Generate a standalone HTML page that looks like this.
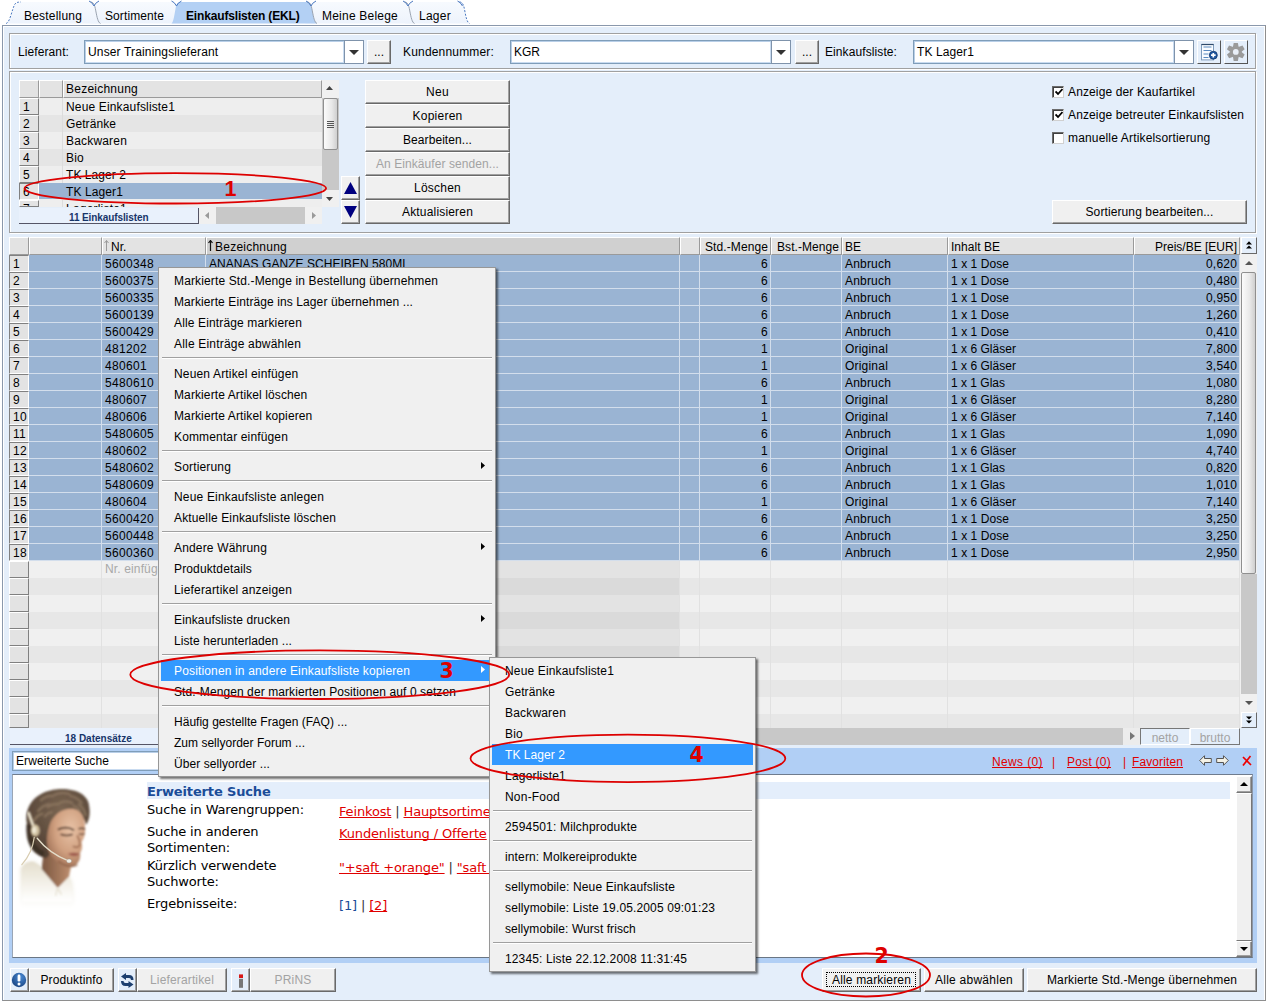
<!DOCTYPE html>
<html lang="de"><head><meta charset="utf-8"><title>Einkaufslisten (EKL)</title>
<style>
html,body{margin:0;padding:0;}
body{width:1266px;height:1001px;position:relative;overflow:hidden;background:#fff;
 font-family:"Liberation Sans",sans-serif;font-size:12px;color:#000;line-height:14px;}
div,span,svg{position:absolute;box-sizing:border-box;}
.t{white-space:nowrap;line-height:14px;height:14px;}
.panel{background:#e4eefa;}
.etch{border:1px solid #a0a0a0;box-shadow:inset 1px 1px 0 #fff, 1px 1px 0 #fff;}
.btn{background:#f0f0f0;border-top:1px solid #fff;border-left:1px solid #fff;border-right:1px solid #696969;border-bottom:1px solid #696969;box-shadow:inset -1px -1px 0 #a0a0a0;
 text-align:center;white-space:nowrap;line-height:23px;}
.btn.dis{color:#a3a3a3;}
.combo{background:#fff;border:2px solid #7f9db9;border-top-color:#6886a8;border-left-color:#7f9db9;}
.hdr{background:#e3e3e3;border-right:1px solid #9a9a9a;border-bottom:1px solid #9a9a9a;border-top:1px solid #fff;border-left:1px solid #fff;white-space:nowrap;overflow:hidden;line-height:18px;}
.rn{background:#e3e3e3;border-top:1px solid #fff;border-left:1px solid #fff;border-right:1px solid #808080;border-bottom:1px solid #808080;line-height:16px;padding-left:3px;overflow:hidden;}
.rn.prs{border-top-color:#808080;border-left-color:#808080;border-right-color:#fff;border-bottom-color:#fff;}
.cell{white-space:nowrap;line-height:19px;border-right:1px solid #d3deec;border-bottom:1px solid #d3deec;}
.sel{background:#9ab4d3;}
.r{text-align:right;}
.menu{background:#f0f0f0;border:1px solid #979797;box-shadow:2px 2px 2px rgba(0,0,0,.55);}
.mi{left:2px;height:21px;line-height:21px;white-space:nowrap;}
.mi span{position:absolute;left:13px;top:1px;line-height:21px;}
.mi.hl{background:#3399ff;color:#fff;}
.msep{height:1px;background:#a0a0a0;box-shadow:0 1px 0 #fff;}
.red{color:#e00000;}
a{color:#e00000;text-decoration:underline;text-decoration-skip-ink:none;}
.dj{font-family:"DejaVu Sans","Liberation Sans",sans-serif;}

</style></head>
<body>
<svg width="1266" height="26" style="left:0;top:0" viewBox="0 0 1266 26"><defs><linearGradient id="tg" x1="0" y1="0" x2="0" y2="1"><stop offset="0" stop-color="#f7fafe"/><stop offset="1" stop-color="#edf3fc"/></linearGradient></defs><path d="M405 23.5 C407.0 22.5 408.0 14 409.0 9 S410.0 2 415 2 L459.5 2 C463.5 2 464.0 7 465.0 12 S467.0 22.5 469.5 23.5 Z" fill="url(#tg)"/><path d="M459.5 2 C463.5 2 464.0 7 465.0 12 S467.0 22.5 469.5 23.5" fill="none" stroke="#4a78c0" stroke-width="1" stroke-dasharray="2 1.5"/><path d="M457.5 1 q3 1 5 5" fill="none" stroke="#4a78c0" stroke-width="1"/><path d="M305 23.5 C307.0 22.5 308.0 14 309.0 9 S310.0 2 315 2 L404.5 2 C408.5 2 409.0 7 410.0 12 S412.0 22.5 414.5 23.5 Z" fill="url(#tg)"/><path d="M404.5 2 C408.5 2 409.0 7 410.0 12 S412.0 22.5 414.5 23.5" fill="none" stroke="#9aa3b0" stroke-width="1"/><path d="M403.0 1 q3 1 5 5 q1 -3 5 -5" fill="none" stroke="#4a78c0" stroke-width="1"/><path d="M90 23.5 C92.0 22.5 93.0 14 94.0 9 S95.0 2 100 2 L172 2 C176 2 176.5 7 177.5 12 S179.5 22.5 182 23.5 Z" fill="url(#tg)"/><path d="M6 23.5 C9.4 22.5 11.1 14 12.9 9 S14.6 2 21 2 L90.5 2 C94.5 2 95.0 7 96.0 12 S98.0 22.5 100.5 23.5 Z" fill="url(#tg)"/><path d="M90.5 2 C94.5 2 95.0 7 96.0 12 S98.0 22.5 100.5 23.5" fill="none" stroke="#9aa3b0" stroke-width="1"/><path d="M89.0 1 q3 1 5 5 q1 -3 5 -5" fill="none" stroke="#4a78c0" stroke-width="1"/><path d="M6 23.5 C9.4 22.5 11.1 14 12.9 9 S14.6 2 21 2" fill="none" stroke="#4a78c0" stroke-width="1" stroke-dasharray="2 1.5"/><path d="M171.5 23.5 C173.5 22.5 174.5 14 175.5 9 S176.5 2 181.5 2 L307 2 C311 2 311.5 7 312.5 12 S314.5 22.5 317 23.5 Z" fill="#b3d0f4"/><path d="M307 2 C311 2 311.5 7 312.5 12 S314.5 22.5 317 23.5" fill="none" stroke="#9aa3b0" stroke-width="1"/><path d="M171.5 1 q3 1 5 5 q1 -3 5 -5" fill="none" stroke="#4a78c0" stroke-width="1"/><path d="M306 1 q3 1 5 5 q1 -3 5 -5" fill="none" stroke="#4a78c0" stroke-width="1"/></svg><div class="t" style="left:24px;top:9px;letter-spacing:0.196px;">Bestellung</div><div class="t" style="left:105px;top:9px;letter-spacing:0.097px;">Sortimente</div><div class="t" style="left:186px;top:9px;letter-spacing:0.098px;font-weight:bold;letter-spacing:-0.16px;">Einkaufslisten (EKL)</div><div class="t" style="left:322px;top:9px;letter-spacing:0.218px;">Meine Belege</div><div class="t" style="left:419px;top:9px;letter-spacing:0.262px;">Lager</div><div class="panel" style="left:2px;top:25px;width:1264px;height:976px;border:1px solid #8a98ac;border-right-color:#8e8e8e;border-bottom-color:#8e8e8e;box-shadow:inset 1px 1px 0 #fff, inset -1px 0 0 #fff;"></div><div class="etch" style="left:9px;top:33px;width:1247px;height:36px;"></div><div class="t" style="left:18px;top:45px;letter-spacing:0.097px;">Lieferant:</div><div style="left:84px;top:40px;width:261px;height:24px;background:#fff;border:1px solid #7f9db9;box-shadow:inset 1px 1px 0 #b9cfe8, inset -1px -1px 0 #c9dbf0;"><div class="t" style="left:3px;top:4px;letter-spacing:0.15px;">Unser Trainingslieferant</div></div><div style="left:344px;top:40px;width:20px;height:24px;background:#fff;border:1px solid #7f93ab;"><svg width="10" height="5" style="left:4px;top:9px" viewBox="0 0 10 5"><path d="M0 0H10L5 5Z" fill="#333"/></svg></div><div class="btn" style="left:367px;top:40px;width:24px;height:24px;line-height:22px;">...</div><div class="t" style="left:403px;top:45px;letter-spacing:0.176px;">Kundennummer:</div><div style="left:510px;top:40px;width:262px;height:24px;background:#fff;border:1px solid #7f9db9;box-shadow:inset 1px 1px 0 #b9cfe8, inset -1px -1px 0 #c9dbf0;"><div class="t" style="left:3px;top:4px;">KGR</div></div><div style="left:771px;top:40px;width:20px;height:24px;background:#fff;border:1px solid #7f93ab;"><svg width="10" height="5" style="left:4px;top:9px" viewBox="0 0 10 5"><path d="M0 0H10L5 5Z" fill="#333"/></svg></div><div class="btn" style="left:795px;top:40px;width:24px;height:24px;line-height:22px;">...</div><div class="t" style="left:825px;top:45px;letter-spacing:0.093px;">Einkaufsliste:</div><div style="left:913px;top:40px;width:262px;height:24px;background:#fff;border:1px solid #7f9db9;box-shadow:inset 1px 1px 0 #b9cfe8, inset -1px -1px 0 #c9dbf0;"><div class="t" style="left:3px;top:4px;letter-spacing:0.107px;">TK Lager1</div></div><div style="left:1174px;top:40px;width:20px;height:24px;background:#fff;border:1px solid #7f93ab;"><svg width="10" height="5" style="left:4px;top:9px" viewBox="0 0 10 5"><path d="M0 0H10L5 5Z" fill="#333"/></svg></div><div class="btn" style="left:1197px;top:40px;width:24px;height:24px;background:#e4eefa;box-shadow:none;border-right-color:#555;border-bottom-color:#555;"><svg width="21" height="21" style="left:1px;top:1px" viewBox="0 0 21 21"><rect x="2.5" y="2.5" width="12" height="15.4" fill="#fafcff" stroke="#7f9cbc" stroke-width="1"/><path d="M2.5 2.5h12" stroke="#2f4a6a" stroke-width="1.2"/><path d="M4.5 5h8M4.5 8.5h8M4.5 12h5M4.5 15.5h5" stroke="#5a8ac0" stroke-width="1.1"/><circle cx="14.3" cy="13.2" r="4" fill="#1d55a0" stroke="#12396f" stroke-width=".8"/><path d="M12 13.2h4.6M14.3 10.9v4.6" stroke="#fff" stroke-width="1.7"/></svg></div><div class="btn" style="left:1224px;top:40px;width:24px;height:24px;background:#e4eefa;box-shadow:none;border-right-color:#555;border-bottom-color:#555;"><svg width="21" height="21" style="left:1px;top:1px" viewBox="0 0 21 21"><g transform="translate(9.8 9.9)"><path d="M-2.1 -9 L2.1 -9 L2.9 -4.6 L-2.9 -4.6Z" transform="rotate(0)" fill="#9a9a9a"/><path d="M-2.1 -9 L2.1 -9 L2.9 -4.6 L-2.9 -4.6Z" transform="rotate(60)" fill="#9a9a9a"/><path d="M-2.1 -9 L2.1 -9 L2.9 -4.6 L-2.9 -4.6Z" transform="rotate(120)" fill="#9a9a9a"/><path d="M-2.1 -9 L2.1 -9 L2.9 -4.6 L-2.9 -4.6Z" transform="rotate(180)" fill="#9a9a9a"/><path d="M-2.1 -9 L2.1 -9 L2.9 -4.6 L-2.9 -4.6Z" transform="rotate(240)" fill="#9a9a9a"/><path d="M-2.1 -9 L2.1 -9 L2.9 -4.6 L-2.9 -4.6Z" transform="rotate(300)" fill="#9a9a9a"/><circle r="5.8" fill="#9a9a9a"/><circle r="2.9" fill="#e9eff8"/></g></svg></div><div class="etch" style="left:9px;top:71px;width:1247px;height:162px;"></div><div style="left:19px;top:80px;width:303px;height:127px;background:#eeeeee;overflow:hidden;"></div><div class="hdr" style="left:19px;top:80px;width:20px;height:18px;"></div><div class="hdr" style="left:39px;top:80px;width:24px;height:18px;"></div><div class="hdr" style="left:63px;top:80px;width:259px;height:18px;padding-left:2px;line-height:17px;letter-spacing:0.238px;">Bezeichnung</div><div class="rn" style="left:19px;top:98px;width:20px;height:17px;">1</div><div style="left:39px;top:98px;width:283px;height:17px;background:#eeeeee;overflow:hidden;"><div class="t" style="left:27px;top:2px;letter-spacing:0.155px;">Neue Einkaufsliste1</div></div><div style="left:39px;top:98px;width:24px;height:17px;border-right:1px solid #dcdcdc;"></div><div class="rn" style="left:19px;top:115px;width:20px;height:17px;">2</div><div style="left:39px;top:115px;width:283px;height:17px;background:#e5e5e5;overflow:hidden;"><div class="t" style="left:27px;top:2px;letter-spacing:0.08px;">Getränke</div></div><div style="left:39px;top:115px;width:24px;height:17px;border-right:1px solid #dcdcdc;"></div><div class="rn" style="left:19px;top:132px;width:20px;height:17px;">3</div><div style="left:39px;top:132px;width:283px;height:17px;background:#eeeeee;overflow:hidden;"><div class="t" style="left:27px;top:2px;letter-spacing:0.182px;">Backwaren</div></div><div style="left:39px;top:132px;width:24px;height:17px;border-right:1px solid #dcdcdc;"></div><div class="rn" style="left:19px;top:149px;width:20px;height:17px;">4</div><div style="left:39px;top:149px;width:283px;height:17px;background:#e5e5e5;overflow:hidden;"><div class="t" style="left:27px;top:2px;letter-spacing:0.219px;">Bio</div></div><div style="left:39px;top:149px;width:24px;height:17px;border-right:1px solid #dcdcdc;"></div><div class="rn" style="left:19px;top:166px;width:20px;height:17px;">5</div><div style="left:39px;top:166px;width:283px;height:17px;background:#eeeeee;overflow:hidden;"><div class="t" style="left:27px;top:2px;letter-spacing:0.063px;">TK Lager 2</div></div><div style="left:39px;top:166px;width:24px;height:17px;border-right:1px solid #dcdcdc;"></div><div class="rn prs" style="left:19px;top:183px;width:20px;height:17px;">6</div><div style="left:39px;top:183px;width:283px;height:16px;background:#9ab4d3;overflow:hidden;"><div class="t" style="left:27px;top:2px;letter-spacing:0.107px;">TK Lager1</div></div><div class="rn" style="left:19px;top:200px;width:20px;height:7px;">7</div><div style="left:39px;top:200px;width:283px;height:7px;background:#eeeeee;overflow:hidden;"><div class="t" style="left:27px;top:2px;letter-spacing:0.209px;">Lagerliste1</div></div><div style="left:39px;top:200px;width:24px;height:7px;border-right:1px solid #dcdcdc;"></div><div style="left:322px;top:80px;width:17px;height:127px;background:#c8c8c8;"></div><div style="left:322px;top:80px;width:17px;height:18px;background:#f0f0f0;"><svg width="7" height="4" style="left:4px;top:6px" viewBox="0 0 7 4"><path d="M0 4H7L3.5 0Z" fill="#444"/></svg></div><div style="left:323px;top:98px;width:15px;height:52px;background:linear-gradient(90deg,#fbfbfb,#e8e8e8 60%,#cfcfcf);border:1px solid #8f8f8f;border-radius:2px;"><div style="left:3px;top:22px;width:7px;height:1px;background:#555;box-shadow:0 2px 0 #555,0 4px 0 #555,0 6px 0 #555"></div></div><div style="left:322px;top:190px;width:17px;height:17px;background:#f0f0f0;"><svg width="7" height="4" style="left:4px;top:7px" viewBox="0 0 7 4"><path d="M0 0H7L3.5 4Z" fill="#444"/></svg></div><div style="left:19px;top:208px;width:180px;height:16px;background:#e9f1fc;border-bottom:1px solid #556;border-right:1px solid #556;"><div class="t" style="left:50px;top:3px;font-size:10px;font-weight:bold;color:#17356a;letter-spacing:-0.1px;">11 Einkaufslisten</div></div><div style="left:199px;top:207px;width:123px;height:17px;background:#f0f0f0;"></div><div style="left:216px;top:207px;width:89px;height:17px;background:#c8c8c8;"></div><svg width="4" height="7" style="left:205px;top:212px" viewBox="0 0 4 7"><path d="M4 0V7L0 3.5Z" fill="#9a9a9a"/></svg><svg width="4" height="7" style="left:312px;top:212px" viewBox="0 0 4 7"><path d="M0 0V7L4 3.5Z" fill="#9a9a9a"/></svg><div class="btn" style="left:341px;top:176px;width:19px;height:24px;"><svg width="13" height="12" style="left:2px;top:5px" viewBox="0 0 13 12"><path d="M0 12H13L6.5 0Z" fill="#00007f"/></svg></div><div class="btn" style="left:341px;top:200px;width:19px;height:24px;"><svg width="13" height="12" style="left:2px;top:5px" viewBox="0 0 13 12"><path d="M0 0H13L6.5 12Z" fill="#00007f"/></svg></div><div class="btn" style="left:365px;top:80px;width:145px;height:24px;letter-spacing:0.329px;">Neu</div><div class="btn" style="left:365px;top:104px;width:145px;height:24px;letter-spacing:0.246px;">Kopieren</div><div class="btn" style="left:365px;top:128px;width:145px;height:24px;letter-spacing:0.073px;">Bearbeiten...</div><div class="btn dis" style="left:365px;top:152px;width:145px;height:24px;letter-spacing:0.072px;">An Einkäufer senden...</div><div class="btn" style="left:365px;top:176px;width:145px;height:24px;letter-spacing:0.233px;">Löschen</div><div class="btn" style="left:365px;top:200px;width:145px;height:24px;letter-spacing:0.177px;">Aktualisieren</div><div style="left:1052px;top:86px;width:12px;height:12px;background:#fff;border:1px solid #6b6b6b;border-right-color:#d0d0d0;border-bottom-color:#d0d0d0;box-shadow:inset 1px 1px 0 #404040;"><svg width="8" height="8" style="left:2px;top:1px" viewBox="0 0 8 8"><path d="M0.5 3.5L3 6L7.5 1" fill="none" stroke="#000" stroke-width="1.8"/></svg></div><div class="t" style="left:1068px;top:85px;letter-spacing:0.127px;">Anzeige der Kaufartikel</div><div style="left:1052px;top:109px;width:12px;height:12px;background:#fff;border:1px solid #6b6b6b;border-right-color:#d0d0d0;border-bottom-color:#d0d0d0;box-shadow:inset 1px 1px 0 #404040;"><svg width="8" height="8" style="left:2px;top:1px" viewBox="0 0 8 8"><path d="M0.5 3.5L3 6L7.5 1" fill="none" stroke="#000" stroke-width="1.8"/></svg></div><div class="t" style="left:1068px;top:108px;letter-spacing:0.122px;">Anzeige betreuter Einkaufslisten</div><div style="left:1052px;top:132px;width:12px;height:12px;background:#fff;border:1px solid #6b6b6b;border-right-color:#d0d0d0;border-bottom-color:#d0d0d0;box-shadow:inset 1px 1px 0 #404040;"></div><div class="t" style="left:1068px;top:131px;letter-spacing:0.164px;">manuelle Artikelsortierung</div><div class="btn" style="left:1052px;top:200px;width:195px;height:24px;letter-spacing:0.108px;">Sortierung bearbeiten...</div><div style="left:9px;top:237px;width:1248px;height:491px;background:#ececec;"></div><div class="hdr" style="left:9px;top:237px;width:20px;height:18px;"></div><div class="hdr" style="left:29px;top:237px;width:73px;height:18px;"></div><div class="hdr" style="left:102px;top:237px;width:104px;height:18px;padding-left:8px;"><svg width="5" height="11" style="left:1px;top:2px" viewBox="0 0 5 11"><path d="M2.5 0.5V11M0.5 3L2.5 0.5L4.5 3" fill="none" stroke="#9a9a9a" stroke-width="1"/></svg>Nr.</div><div class="hdr" style="left:206px;top:237px;width:474px;height:18px;padding-left:8px;background:#d0d0d0;letter-spacing:0.238px;"><svg width="5" height="11" style="left:1px;top:2px" viewBox="0 0 5 11"><path d="M2.5 0.5V11M0.5 3L2.5 0.5L4.5 3" fill="none" stroke="#111" stroke-width="1.2"/></svg>Bezeichnung</div><div class="hdr" style="left:680px;top:237px;width:20px;height:18px;"></div><div class="hdr" style="left:700px;top:237px;width:71px;height:18px;text-align:right;padding-right:2px;letter-spacing:0.097px;">Std.-Menge</div><div class="hdr" style="left:771px;top:237px;width:71px;height:18px;text-align:right;padding-right:2px;letter-spacing:0.064px;">Bst.-Menge</div><div class="hdr" style="left:842px;top:237px;width:106px;height:18px;padding-left:2px;">BE</div><div class="hdr" style="left:948px;top:237px;width:186px;height:18px;padding-left:2px;letter-spacing:0.034px;">Inhalt BE</div><div class="hdr" style="left:1134px;top:237px;width:106px;height:18px;text-align:right;padding-right:2px;">Preis/BE [EUR]</div><div class="rn prs" style="left:9px;top:255px;width:20px;height:17px;letter-spacing:0.326px;">1</div><div class="sel" style="left:29px;top:255px;width:1211px;height:17px;"></div><div class="cell" style="left:29px;top:255px;width:73px;height:17px;padding-left:3px;"></div><div class="cell" style="left:102px;top:255px;width:104px;height:17px;padding-left:3px;letter-spacing:0.326px;">5600348</div><div class="cell" style="left:206px;top:255px;width:474px;height:17px;padding-left:3px;letter-spacing:0.047px;">ANANAS GANZE SCHEIBEN 580ML</div><div class="cell" style="left:680px;top:255px;width:20px;height:17px;padding-left:3px;"></div><div class="cell" style="left:700px;top:255px;width:71px;height:17px;text-align:right;padding-right:2px;letter-spacing:0.326px;">6</div><div class="cell" style="left:771px;top:255px;width:71px;height:17px;text-align:right;padding-right:2px;"></div><div class="cell" style="left:842px;top:255px;width:106px;height:17px;padding-left:3px;letter-spacing:0.186px;">Anbruch</div><div class="cell" style="left:948px;top:255px;width:186px;height:17px;padding-left:3px;letter-spacing:0.064px;">1 x 1 Dose</div><div class="cell" style="left:1134px;top:255px;width:106px;height:17px;text-align:right;padding-right:2px;letter-spacing:0.194px;">0,620</div><div class="rn prs" style="left:9px;top:272px;width:20px;height:17px;letter-spacing:0.326px;">2</div><div class="sel" style="left:29px;top:272px;width:1211px;height:17px;"></div><div class="cell" style="left:29px;top:272px;width:73px;height:17px;padding-left:3px;"></div><div class="cell" style="left:102px;top:272px;width:104px;height:17px;padding-left:3px;letter-spacing:0.326px;">5600375</div><div class="cell" style="left:206px;top:272px;width:474px;height:17px;padding-left:3px;"></div><div class="cell" style="left:680px;top:272px;width:20px;height:17px;padding-left:3px;"></div><div class="cell" style="left:700px;top:272px;width:71px;height:17px;text-align:right;padding-right:2px;letter-spacing:0.326px;">6</div><div class="cell" style="left:771px;top:272px;width:71px;height:17px;text-align:right;padding-right:2px;"></div><div class="cell" style="left:842px;top:272px;width:106px;height:17px;padding-left:3px;letter-spacing:0.186px;">Anbruch</div><div class="cell" style="left:948px;top:272px;width:186px;height:17px;padding-left:3px;letter-spacing:0.064px;">1 x 1 Dose</div><div class="cell" style="left:1134px;top:272px;width:106px;height:17px;text-align:right;padding-right:2px;letter-spacing:0.194px;">0,480</div><div class="rn prs" style="left:9px;top:289px;width:20px;height:17px;letter-spacing:0.326px;">3</div><div class="sel" style="left:29px;top:289px;width:1211px;height:17px;"></div><div class="cell" style="left:29px;top:289px;width:73px;height:17px;padding-left:3px;"></div><div class="cell" style="left:102px;top:289px;width:104px;height:17px;padding-left:3px;letter-spacing:0.326px;">5600335</div><div class="cell" style="left:206px;top:289px;width:474px;height:17px;padding-left:3px;"></div><div class="cell" style="left:680px;top:289px;width:20px;height:17px;padding-left:3px;"></div><div class="cell" style="left:700px;top:289px;width:71px;height:17px;text-align:right;padding-right:2px;letter-spacing:0.326px;">6</div><div class="cell" style="left:771px;top:289px;width:71px;height:17px;text-align:right;padding-right:2px;"></div><div class="cell" style="left:842px;top:289px;width:106px;height:17px;padding-left:3px;letter-spacing:0.186px;">Anbruch</div><div class="cell" style="left:948px;top:289px;width:186px;height:17px;padding-left:3px;letter-spacing:0.064px;">1 x 1 Dose</div><div class="cell" style="left:1134px;top:289px;width:106px;height:17px;text-align:right;padding-right:2px;letter-spacing:0.194px;">0,950</div><div class="rn prs" style="left:9px;top:306px;width:20px;height:17px;letter-spacing:0.326px;">4</div><div class="sel" style="left:29px;top:306px;width:1211px;height:17px;"></div><div class="cell" style="left:29px;top:306px;width:73px;height:17px;padding-left:3px;"></div><div class="cell" style="left:102px;top:306px;width:104px;height:17px;padding-left:3px;letter-spacing:0.326px;">5600139</div><div class="cell" style="left:206px;top:306px;width:474px;height:17px;padding-left:3px;"></div><div class="cell" style="left:680px;top:306px;width:20px;height:17px;padding-left:3px;"></div><div class="cell" style="left:700px;top:306px;width:71px;height:17px;text-align:right;padding-right:2px;letter-spacing:0.326px;">6</div><div class="cell" style="left:771px;top:306px;width:71px;height:17px;text-align:right;padding-right:2px;"></div><div class="cell" style="left:842px;top:306px;width:106px;height:17px;padding-left:3px;letter-spacing:0.186px;">Anbruch</div><div class="cell" style="left:948px;top:306px;width:186px;height:17px;padding-left:3px;letter-spacing:0.064px;">1 x 1 Dose</div><div class="cell" style="left:1134px;top:306px;width:106px;height:17px;text-align:right;padding-right:2px;letter-spacing:0.194px;">1,260</div><div class="rn prs" style="left:9px;top:323px;width:20px;height:17px;letter-spacing:0.326px;">5</div><div class="sel" style="left:29px;top:323px;width:1211px;height:17px;"></div><div class="cell" style="left:29px;top:323px;width:73px;height:17px;padding-left:3px;"></div><div class="cell" style="left:102px;top:323px;width:104px;height:17px;padding-left:3px;letter-spacing:0.326px;">5600429</div><div class="cell" style="left:206px;top:323px;width:474px;height:17px;padding-left:3px;"></div><div class="cell" style="left:680px;top:323px;width:20px;height:17px;padding-left:3px;"></div><div class="cell" style="left:700px;top:323px;width:71px;height:17px;text-align:right;padding-right:2px;letter-spacing:0.326px;">6</div><div class="cell" style="left:771px;top:323px;width:71px;height:17px;text-align:right;padding-right:2px;"></div><div class="cell" style="left:842px;top:323px;width:106px;height:17px;padding-left:3px;letter-spacing:0.186px;">Anbruch</div><div class="cell" style="left:948px;top:323px;width:186px;height:17px;padding-left:3px;letter-spacing:0.064px;">1 x 1 Dose</div><div class="cell" style="left:1134px;top:323px;width:106px;height:17px;text-align:right;padding-right:2px;letter-spacing:0.194px;">0,410</div><div class="rn prs" style="left:9px;top:340px;width:20px;height:17px;letter-spacing:0.326px;">6</div><div class="sel" style="left:29px;top:340px;width:1211px;height:17px;"></div><div class="cell" style="left:29px;top:340px;width:73px;height:17px;padding-left:3px;"></div><div class="cell" style="left:102px;top:340px;width:104px;height:17px;padding-left:3px;letter-spacing:0.326px;">481202</div><div class="cell" style="left:206px;top:340px;width:474px;height:17px;padding-left:3px;"></div><div class="cell" style="left:680px;top:340px;width:20px;height:17px;padding-left:3px;"></div><div class="cell" style="left:700px;top:340px;width:71px;height:17px;text-align:right;padding-right:2px;letter-spacing:0.326px;">1</div><div class="cell" style="left:771px;top:340px;width:71px;height:17px;text-align:right;padding-right:2px;"></div><div class="cell" style="left:842px;top:340px;width:106px;height:17px;padding-left:3px;letter-spacing:0.206px;">Original</div><div class="cell" style="left:948px;top:340px;width:186px;height:17px;padding-left:3px;letter-spacing:0.026px;">1 x 6 Gläser</div><div class="cell" style="left:1134px;top:340px;width:106px;height:17px;text-align:right;padding-right:2px;letter-spacing:0.194px;">7,800</div><div class="rn prs" style="left:9px;top:357px;width:20px;height:17px;letter-spacing:0.326px;">7</div><div class="sel" style="left:29px;top:357px;width:1211px;height:17px;"></div><div class="cell" style="left:29px;top:357px;width:73px;height:17px;padding-left:3px;"></div><div class="cell" style="left:102px;top:357px;width:104px;height:17px;padding-left:3px;letter-spacing:0.326px;">480601</div><div class="cell" style="left:206px;top:357px;width:474px;height:17px;padding-left:3px;"></div><div class="cell" style="left:680px;top:357px;width:20px;height:17px;padding-left:3px;"></div><div class="cell" style="left:700px;top:357px;width:71px;height:17px;text-align:right;padding-right:2px;letter-spacing:0.326px;">1</div><div class="cell" style="left:771px;top:357px;width:71px;height:17px;text-align:right;padding-right:2px;"></div><div class="cell" style="left:842px;top:357px;width:106px;height:17px;padding-left:3px;letter-spacing:0.206px;">Original</div><div class="cell" style="left:948px;top:357px;width:186px;height:17px;padding-left:3px;letter-spacing:0.026px;">1 x 6 Gläser</div><div class="cell" style="left:1134px;top:357px;width:106px;height:17px;text-align:right;padding-right:2px;letter-spacing:0.194px;">3,540</div><div class="rn prs" style="left:9px;top:374px;width:20px;height:17px;letter-spacing:0.326px;">8</div><div class="sel" style="left:29px;top:374px;width:1211px;height:17px;"></div><div class="cell" style="left:29px;top:374px;width:73px;height:17px;padding-left:3px;"></div><div class="cell" style="left:102px;top:374px;width:104px;height:17px;padding-left:3px;letter-spacing:0.326px;">5480610</div><div class="cell" style="left:206px;top:374px;width:474px;height:17px;padding-left:3px;"></div><div class="cell" style="left:680px;top:374px;width:20px;height:17px;padding-left:3px;"></div><div class="cell" style="left:700px;top:374px;width:71px;height:17px;text-align:right;padding-right:2px;letter-spacing:0.326px;">6</div><div class="cell" style="left:771px;top:374px;width:71px;height:17px;text-align:right;padding-right:2px;"></div><div class="cell" style="left:842px;top:374px;width:106px;height:17px;padding-left:3px;letter-spacing:0.186px;">Anbruch</div><div class="cell" style="left:948px;top:374px;width:186px;height:17px;padding-left:3px;">1 x 1 Glas</div><div class="cell" style="left:1134px;top:374px;width:106px;height:17px;text-align:right;padding-right:2px;letter-spacing:0.194px;">1,080</div><div class="rn prs" style="left:9px;top:391px;width:20px;height:17px;letter-spacing:0.326px;">9</div><div class="sel" style="left:29px;top:391px;width:1211px;height:17px;"></div><div class="cell" style="left:29px;top:391px;width:73px;height:17px;padding-left:3px;"></div><div class="cell" style="left:102px;top:391px;width:104px;height:17px;padding-left:3px;letter-spacing:0.326px;">480607</div><div class="cell" style="left:206px;top:391px;width:474px;height:17px;padding-left:3px;"></div><div class="cell" style="left:680px;top:391px;width:20px;height:17px;padding-left:3px;"></div><div class="cell" style="left:700px;top:391px;width:71px;height:17px;text-align:right;padding-right:2px;letter-spacing:0.326px;">1</div><div class="cell" style="left:771px;top:391px;width:71px;height:17px;text-align:right;padding-right:2px;"></div><div class="cell" style="left:842px;top:391px;width:106px;height:17px;padding-left:3px;letter-spacing:0.206px;">Original</div><div class="cell" style="left:948px;top:391px;width:186px;height:17px;padding-left:3px;letter-spacing:0.026px;">1 x 6 Gläser</div><div class="cell" style="left:1134px;top:391px;width:106px;height:17px;text-align:right;padding-right:2px;letter-spacing:0.194px;">8,280</div><div class="rn prs" style="left:9px;top:408px;width:20px;height:17px;letter-spacing:0.326px;">10</div><div class="sel" style="left:29px;top:408px;width:1211px;height:17px;"></div><div class="cell" style="left:29px;top:408px;width:73px;height:17px;padding-left:3px;"></div><div class="cell" style="left:102px;top:408px;width:104px;height:17px;padding-left:3px;letter-spacing:0.326px;">480606</div><div class="cell" style="left:206px;top:408px;width:474px;height:17px;padding-left:3px;"></div><div class="cell" style="left:680px;top:408px;width:20px;height:17px;padding-left:3px;"></div><div class="cell" style="left:700px;top:408px;width:71px;height:17px;text-align:right;padding-right:2px;letter-spacing:0.326px;">1</div><div class="cell" style="left:771px;top:408px;width:71px;height:17px;text-align:right;padding-right:2px;"></div><div class="cell" style="left:842px;top:408px;width:106px;height:17px;padding-left:3px;letter-spacing:0.206px;">Original</div><div class="cell" style="left:948px;top:408px;width:186px;height:17px;padding-left:3px;letter-spacing:0.026px;">1 x 6 Gläser</div><div class="cell" style="left:1134px;top:408px;width:106px;height:17px;text-align:right;padding-right:2px;letter-spacing:0.194px;">7,140</div><div class="rn prs" style="left:9px;top:425px;width:20px;height:17px;letter-spacing:0.326px;">11</div><div class="sel" style="left:29px;top:425px;width:1211px;height:17px;"></div><div class="cell" style="left:29px;top:425px;width:73px;height:17px;padding-left:3px;"></div><div class="cell" style="left:102px;top:425px;width:104px;height:17px;padding-left:3px;letter-spacing:0.326px;">5480605</div><div class="cell" style="left:206px;top:425px;width:474px;height:17px;padding-left:3px;"></div><div class="cell" style="left:680px;top:425px;width:20px;height:17px;padding-left:3px;"></div><div class="cell" style="left:700px;top:425px;width:71px;height:17px;text-align:right;padding-right:2px;letter-spacing:0.326px;">6</div><div class="cell" style="left:771px;top:425px;width:71px;height:17px;text-align:right;padding-right:2px;"></div><div class="cell" style="left:842px;top:425px;width:106px;height:17px;padding-left:3px;letter-spacing:0.186px;">Anbruch</div><div class="cell" style="left:948px;top:425px;width:186px;height:17px;padding-left:3px;">1 x 1 Glas</div><div class="cell" style="left:1134px;top:425px;width:106px;height:17px;text-align:right;padding-right:2px;letter-spacing:0.194px;">1,090</div><div class="rn prs" style="left:9px;top:442px;width:20px;height:17px;letter-spacing:0.326px;">12</div><div class="sel" style="left:29px;top:442px;width:1211px;height:17px;"></div><div class="cell" style="left:29px;top:442px;width:73px;height:17px;padding-left:3px;"></div><div class="cell" style="left:102px;top:442px;width:104px;height:17px;padding-left:3px;letter-spacing:0.326px;">480602</div><div class="cell" style="left:206px;top:442px;width:474px;height:17px;padding-left:3px;"></div><div class="cell" style="left:680px;top:442px;width:20px;height:17px;padding-left:3px;"></div><div class="cell" style="left:700px;top:442px;width:71px;height:17px;text-align:right;padding-right:2px;letter-spacing:0.326px;">1</div><div class="cell" style="left:771px;top:442px;width:71px;height:17px;text-align:right;padding-right:2px;"></div><div class="cell" style="left:842px;top:442px;width:106px;height:17px;padding-left:3px;letter-spacing:0.206px;">Original</div><div class="cell" style="left:948px;top:442px;width:186px;height:17px;padding-left:3px;letter-spacing:0.026px;">1 x 6 Gläser</div><div class="cell" style="left:1134px;top:442px;width:106px;height:17px;text-align:right;padding-right:2px;letter-spacing:0.194px;">4,740</div><div class="rn prs" style="left:9px;top:459px;width:20px;height:17px;letter-spacing:0.326px;">13</div><div class="sel" style="left:29px;top:459px;width:1211px;height:17px;"></div><div class="cell" style="left:29px;top:459px;width:73px;height:17px;padding-left:3px;"></div><div class="cell" style="left:102px;top:459px;width:104px;height:17px;padding-left:3px;letter-spacing:0.326px;">5480602</div><div class="cell" style="left:206px;top:459px;width:474px;height:17px;padding-left:3px;"></div><div class="cell" style="left:680px;top:459px;width:20px;height:17px;padding-left:3px;"></div><div class="cell" style="left:700px;top:459px;width:71px;height:17px;text-align:right;padding-right:2px;letter-spacing:0.326px;">6</div><div class="cell" style="left:771px;top:459px;width:71px;height:17px;text-align:right;padding-right:2px;"></div><div class="cell" style="left:842px;top:459px;width:106px;height:17px;padding-left:3px;letter-spacing:0.186px;">Anbruch</div><div class="cell" style="left:948px;top:459px;width:186px;height:17px;padding-left:3px;">1 x 1 Glas</div><div class="cell" style="left:1134px;top:459px;width:106px;height:17px;text-align:right;padding-right:2px;letter-spacing:0.194px;">0,820</div><div class="rn prs" style="left:9px;top:476px;width:20px;height:17px;letter-spacing:0.326px;">14</div><div class="sel" style="left:29px;top:476px;width:1211px;height:17px;"></div><div class="cell" style="left:29px;top:476px;width:73px;height:17px;padding-left:3px;"></div><div class="cell" style="left:102px;top:476px;width:104px;height:17px;padding-left:3px;letter-spacing:0.326px;">5480609</div><div class="cell" style="left:206px;top:476px;width:474px;height:17px;padding-left:3px;"></div><div class="cell" style="left:680px;top:476px;width:20px;height:17px;padding-left:3px;"></div><div class="cell" style="left:700px;top:476px;width:71px;height:17px;text-align:right;padding-right:2px;letter-spacing:0.326px;">6</div><div class="cell" style="left:771px;top:476px;width:71px;height:17px;text-align:right;padding-right:2px;"></div><div class="cell" style="left:842px;top:476px;width:106px;height:17px;padding-left:3px;letter-spacing:0.186px;">Anbruch</div><div class="cell" style="left:948px;top:476px;width:186px;height:17px;padding-left:3px;">1 x 1 Glas</div><div class="cell" style="left:1134px;top:476px;width:106px;height:17px;text-align:right;padding-right:2px;letter-spacing:0.194px;">1,010</div><div class="rn prs" style="left:9px;top:493px;width:20px;height:17px;letter-spacing:0.326px;">15</div><div class="sel" style="left:29px;top:493px;width:1211px;height:17px;"></div><div class="cell" style="left:29px;top:493px;width:73px;height:17px;padding-left:3px;"></div><div class="cell" style="left:102px;top:493px;width:104px;height:17px;padding-left:3px;letter-spacing:0.326px;">480604</div><div class="cell" style="left:206px;top:493px;width:474px;height:17px;padding-left:3px;"></div><div class="cell" style="left:680px;top:493px;width:20px;height:17px;padding-left:3px;"></div><div class="cell" style="left:700px;top:493px;width:71px;height:17px;text-align:right;padding-right:2px;letter-spacing:0.326px;">1</div><div class="cell" style="left:771px;top:493px;width:71px;height:17px;text-align:right;padding-right:2px;"></div><div class="cell" style="left:842px;top:493px;width:106px;height:17px;padding-left:3px;letter-spacing:0.206px;">Original</div><div class="cell" style="left:948px;top:493px;width:186px;height:17px;padding-left:3px;letter-spacing:0.026px;">1 x 6 Gläser</div><div class="cell" style="left:1134px;top:493px;width:106px;height:17px;text-align:right;padding-right:2px;letter-spacing:0.194px;">7,140</div><div class="rn prs" style="left:9px;top:510px;width:20px;height:17px;letter-spacing:0.326px;">16</div><div class="sel" style="left:29px;top:510px;width:1211px;height:17px;"></div><div class="cell" style="left:29px;top:510px;width:73px;height:17px;padding-left:3px;"></div><div class="cell" style="left:102px;top:510px;width:104px;height:17px;padding-left:3px;letter-spacing:0.326px;">5600420</div><div class="cell" style="left:206px;top:510px;width:474px;height:17px;padding-left:3px;"></div><div class="cell" style="left:680px;top:510px;width:20px;height:17px;padding-left:3px;"></div><div class="cell" style="left:700px;top:510px;width:71px;height:17px;text-align:right;padding-right:2px;letter-spacing:0.326px;">6</div><div class="cell" style="left:771px;top:510px;width:71px;height:17px;text-align:right;padding-right:2px;"></div><div class="cell" style="left:842px;top:510px;width:106px;height:17px;padding-left:3px;letter-spacing:0.186px;">Anbruch</div><div class="cell" style="left:948px;top:510px;width:186px;height:17px;padding-left:3px;letter-spacing:0.064px;">1 x 1 Dose</div><div class="cell" style="left:1134px;top:510px;width:106px;height:17px;text-align:right;padding-right:2px;letter-spacing:0.194px;">3,250</div><div class="rn prs" style="left:9px;top:527px;width:20px;height:17px;letter-spacing:0.326px;">17</div><div class="sel" style="left:29px;top:527px;width:1211px;height:17px;"></div><div class="cell" style="left:29px;top:527px;width:73px;height:17px;padding-left:3px;"></div><div class="cell" style="left:102px;top:527px;width:104px;height:17px;padding-left:3px;letter-spacing:0.326px;">5600448</div><div class="cell" style="left:206px;top:527px;width:474px;height:17px;padding-left:3px;"></div><div class="cell" style="left:680px;top:527px;width:20px;height:17px;padding-left:3px;"></div><div class="cell" style="left:700px;top:527px;width:71px;height:17px;text-align:right;padding-right:2px;letter-spacing:0.326px;">6</div><div class="cell" style="left:771px;top:527px;width:71px;height:17px;text-align:right;padding-right:2px;"></div><div class="cell" style="left:842px;top:527px;width:106px;height:17px;padding-left:3px;letter-spacing:0.186px;">Anbruch</div><div class="cell" style="left:948px;top:527px;width:186px;height:17px;padding-left:3px;letter-spacing:0.064px;">1 x 1 Dose</div><div class="cell" style="left:1134px;top:527px;width:106px;height:17px;text-align:right;padding-right:2px;letter-spacing:0.194px;">3,250</div><div class="rn prs" style="left:9px;top:544px;width:20px;height:17px;letter-spacing:0.326px;">18</div><div class="sel" style="left:29px;top:544px;width:1211px;height:17px;"></div><div class="cell" style="left:29px;top:544px;width:73px;height:17px;padding-left:3px;"></div><div class="cell" style="left:102px;top:544px;width:104px;height:17px;padding-left:3px;letter-spacing:0.326px;">5600360</div><div class="cell" style="left:206px;top:544px;width:474px;height:17px;padding-left:3px;"></div><div class="cell" style="left:680px;top:544px;width:20px;height:17px;padding-left:3px;"></div><div class="cell" style="left:700px;top:544px;width:71px;height:17px;text-align:right;padding-right:2px;letter-spacing:0.326px;">6</div><div class="cell" style="left:771px;top:544px;width:71px;height:17px;text-align:right;padding-right:2px;"></div><div class="cell" style="left:842px;top:544px;width:106px;height:17px;padding-left:3px;letter-spacing:0.186px;">Anbruch</div><div class="cell" style="left:948px;top:544px;width:186px;height:17px;padding-left:3px;letter-spacing:0.064px;">1 x 1 Dose</div><div class="cell" style="left:1134px;top:544px;width:106px;height:17px;text-align:right;padding-right:2px;letter-spacing:0.194px;">2,950</div><div class="rn" style="left:9px;top:561px;width:20px;height:17px;"></div><div style="left:29px;top:561px;width:1211px;height:17px;background:#f0f0f0;"></div><div style="left:206px;top:561px;width:474px;height:17px;background:#e3e3e3;"></div><div style="left:29px;top:561px;width:73px;height:17px;border-right:1px solid #e1e1e1;"></div><div style="left:102px;top:561px;width:104px;height:17px;border-right:1px solid #e1e1e1;"></div><div style="left:206px;top:561px;width:474px;height:17px;border-right:1px solid #e1e1e1;"></div><div style="left:680px;top:561px;width:20px;height:17px;border-right:1px solid #e1e1e1;"></div><div style="left:700px;top:561px;width:71px;height:17px;border-right:1px solid #e1e1e1;"></div><div style="left:771px;top:561px;width:71px;height:17px;border-right:1px solid #e1e1e1;"></div><div style="left:842px;top:561px;width:106px;height:17px;border-right:1px solid #e1e1e1;"></div><div style="left:948px;top:561px;width:186px;height:17px;border-right:1px solid #e1e1e1;"></div><div style="left:1134px;top:561px;width:106px;height:17px;border-right:1px solid #e1e1e1;"></div><div class="t" style="left:105px;top:562px;letter-spacing:0.136px;color:#a8a8a8;">Nr. einfügen</div><div class="rn" style="left:9px;top:578px;width:20px;height:17px;"></div><div style="left:29px;top:578px;width:1211px;height:17px;background:#e7e7e7;"></div><div style="left:206px;top:578px;width:474px;height:17px;background:#dadada;"></div><div style="left:29px;top:578px;width:73px;height:17px;border-right:1px solid #e1e1e1;"></div><div style="left:102px;top:578px;width:104px;height:17px;border-right:1px solid #e1e1e1;"></div><div style="left:206px;top:578px;width:474px;height:17px;border-right:1px solid #e1e1e1;"></div><div style="left:680px;top:578px;width:20px;height:17px;border-right:1px solid #e1e1e1;"></div><div style="left:700px;top:578px;width:71px;height:17px;border-right:1px solid #e1e1e1;"></div><div style="left:771px;top:578px;width:71px;height:17px;border-right:1px solid #e1e1e1;"></div><div style="left:842px;top:578px;width:106px;height:17px;border-right:1px solid #e1e1e1;"></div><div style="left:948px;top:578px;width:186px;height:17px;border-right:1px solid #e1e1e1;"></div><div style="left:1134px;top:578px;width:106px;height:17px;border-right:1px solid #e1e1e1;"></div><div class="rn" style="left:9px;top:595px;width:20px;height:17px;"></div><div style="left:29px;top:595px;width:1211px;height:17px;background:#f0f0f0;"></div><div style="left:206px;top:595px;width:474px;height:17px;background:#e3e3e3;"></div><div style="left:29px;top:595px;width:73px;height:17px;border-right:1px solid #e1e1e1;"></div><div style="left:102px;top:595px;width:104px;height:17px;border-right:1px solid #e1e1e1;"></div><div style="left:206px;top:595px;width:474px;height:17px;border-right:1px solid #e1e1e1;"></div><div style="left:680px;top:595px;width:20px;height:17px;border-right:1px solid #e1e1e1;"></div><div style="left:700px;top:595px;width:71px;height:17px;border-right:1px solid #e1e1e1;"></div><div style="left:771px;top:595px;width:71px;height:17px;border-right:1px solid #e1e1e1;"></div><div style="left:842px;top:595px;width:106px;height:17px;border-right:1px solid #e1e1e1;"></div><div style="left:948px;top:595px;width:186px;height:17px;border-right:1px solid #e1e1e1;"></div><div style="left:1134px;top:595px;width:106px;height:17px;border-right:1px solid #e1e1e1;"></div><div class="rn" style="left:9px;top:612px;width:20px;height:17px;"></div><div style="left:29px;top:612px;width:1211px;height:17px;background:#e7e7e7;"></div><div style="left:206px;top:612px;width:474px;height:17px;background:#dadada;"></div><div style="left:29px;top:612px;width:73px;height:17px;border-right:1px solid #e1e1e1;"></div><div style="left:102px;top:612px;width:104px;height:17px;border-right:1px solid #e1e1e1;"></div><div style="left:206px;top:612px;width:474px;height:17px;border-right:1px solid #e1e1e1;"></div><div style="left:680px;top:612px;width:20px;height:17px;border-right:1px solid #e1e1e1;"></div><div style="left:700px;top:612px;width:71px;height:17px;border-right:1px solid #e1e1e1;"></div><div style="left:771px;top:612px;width:71px;height:17px;border-right:1px solid #e1e1e1;"></div><div style="left:842px;top:612px;width:106px;height:17px;border-right:1px solid #e1e1e1;"></div><div style="left:948px;top:612px;width:186px;height:17px;border-right:1px solid #e1e1e1;"></div><div style="left:1134px;top:612px;width:106px;height:17px;border-right:1px solid #e1e1e1;"></div><div class="rn" style="left:9px;top:629px;width:20px;height:17px;"></div><div style="left:29px;top:629px;width:1211px;height:17px;background:#f0f0f0;"></div><div style="left:206px;top:629px;width:474px;height:17px;background:#e3e3e3;"></div><div style="left:29px;top:629px;width:73px;height:17px;border-right:1px solid #e1e1e1;"></div><div style="left:102px;top:629px;width:104px;height:17px;border-right:1px solid #e1e1e1;"></div><div style="left:206px;top:629px;width:474px;height:17px;border-right:1px solid #e1e1e1;"></div><div style="left:680px;top:629px;width:20px;height:17px;border-right:1px solid #e1e1e1;"></div><div style="left:700px;top:629px;width:71px;height:17px;border-right:1px solid #e1e1e1;"></div><div style="left:771px;top:629px;width:71px;height:17px;border-right:1px solid #e1e1e1;"></div><div style="left:842px;top:629px;width:106px;height:17px;border-right:1px solid #e1e1e1;"></div><div style="left:948px;top:629px;width:186px;height:17px;border-right:1px solid #e1e1e1;"></div><div style="left:1134px;top:629px;width:106px;height:17px;border-right:1px solid #e1e1e1;"></div><div class="rn" style="left:9px;top:646px;width:20px;height:17px;"></div><div style="left:29px;top:646px;width:1211px;height:17px;background:#e7e7e7;"></div><div style="left:206px;top:646px;width:474px;height:17px;background:#dadada;"></div><div style="left:29px;top:646px;width:73px;height:17px;border-right:1px solid #e1e1e1;"></div><div style="left:102px;top:646px;width:104px;height:17px;border-right:1px solid #e1e1e1;"></div><div style="left:206px;top:646px;width:474px;height:17px;border-right:1px solid #e1e1e1;"></div><div style="left:680px;top:646px;width:20px;height:17px;border-right:1px solid #e1e1e1;"></div><div style="left:700px;top:646px;width:71px;height:17px;border-right:1px solid #e1e1e1;"></div><div style="left:771px;top:646px;width:71px;height:17px;border-right:1px solid #e1e1e1;"></div><div style="left:842px;top:646px;width:106px;height:17px;border-right:1px solid #e1e1e1;"></div><div style="left:948px;top:646px;width:186px;height:17px;border-right:1px solid #e1e1e1;"></div><div style="left:1134px;top:646px;width:106px;height:17px;border-right:1px solid #e1e1e1;"></div><div class="rn" style="left:9px;top:663px;width:20px;height:17px;"></div><div style="left:29px;top:663px;width:1211px;height:17px;background:#f0f0f0;"></div><div style="left:206px;top:663px;width:474px;height:17px;background:#e3e3e3;"></div><div style="left:29px;top:663px;width:73px;height:17px;border-right:1px solid #e1e1e1;"></div><div style="left:102px;top:663px;width:104px;height:17px;border-right:1px solid #e1e1e1;"></div><div style="left:206px;top:663px;width:474px;height:17px;border-right:1px solid #e1e1e1;"></div><div style="left:680px;top:663px;width:20px;height:17px;border-right:1px solid #e1e1e1;"></div><div style="left:700px;top:663px;width:71px;height:17px;border-right:1px solid #e1e1e1;"></div><div style="left:771px;top:663px;width:71px;height:17px;border-right:1px solid #e1e1e1;"></div><div style="left:842px;top:663px;width:106px;height:17px;border-right:1px solid #e1e1e1;"></div><div style="left:948px;top:663px;width:186px;height:17px;border-right:1px solid #e1e1e1;"></div><div style="left:1134px;top:663px;width:106px;height:17px;border-right:1px solid #e1e1e1;"></div><div class="rn" style="left:9px;top:680px;width:20px;height:17px;"></div><div style="left:29px;top:680px;width:1211px;height:17px;background:#e7e7e7;"></div><div style="left:206px;top:680px;width:474px;height:17px;background:#dadada;"></div><div style="left:29px;top:680px;width:73px;height:17px;border-right:1px solid #e1e1e1;"></div><div style="left:102px;top:680px;width:104px;height:17px;border-right:1px solid #e1e1e1;"></div><div style="left:206px;top:680px;width:474px;height:17px;border-right:1px solid #e1e1e1;"></div><div style="left:680px;top:680px;width:20px;height:17px;border-right:1px solid #e1e1e1;"></div><div style="left:700px;top:680px;width:71px;height:17px;border-right:1px solid #e1e1e1;"></div><div style="left:771px;top:680px;width:71px;height:17px;border-right:1px solid #e1e1e1;"></div><div style="left:842px;top:680px;width:106px;height:17px;border-right:1px solid #e1e1e1;"></div><div style="left:948px;top:680px;width:186px;height:17px;border-right:1px solid #e1e1e1;"></div><div style="left:1134px;top:680px;width:106px;height:17px;border-right:1px solid #e1e1e1;"></div><div class="rn" style="left:9px;top:697px;width:20px;height:17px;"></div><div style="left:29px;top:697px;width:1211px;height:17px;background:#f0f0f0;"></div><div style="left:206px;top:697px;width:474px;height:17px;background:#e3e3e3;"></div><div style="left:29px;top:697px;width:73px;height:17px;border-right:1px solid #e1e1e1;"></div><div style="left:102px;top:697px;width:104px;height:17px;border-right:1px solid #e1e1e1;"></div><div style="left:206px;top:697px;width:474px;height:17px;border-right:1px solid #e1e1e1;"></div><div style="left:680px;top:697px;width:20px;height:17px;border-right:1px solid #e1e1e1;"></div><div style="left:700px;top:697px;width:71px;height:17px;border-right:1px solid #e1e1e1;"></div><div style="left:771px;top:697px;width:71px;height:17px;border-right:1px solid #e1e1e1;"></div><div style="left:842px;top:697px;width:106px;height:17px;border-right:1px solid #e1e1e1;"></div><div style="left:948px;top:697px;width:186px;height:17px;border-right:1px solid #e1e1e1;"></div><div style="left:1134px;top:697px;width:106px;height:17px;border-right:1px solid #e1e1e1;"></div><div class="rn" style="left:9px;top:714px;width:20px;height:14px;"></div><div style="left:29px;top:714px;width:1211px;height:14px;background:#e7e7e7;"></div><div style="left:206px;top:714px;width:474px;height:14px;background:#dadada;"></div><div style="left:29px;top:714px;width:73px;height:14px;border-right:1px solid #e1e1e1;"></div><div style="left:102px;top:714px;width:104px;height:14px;border-right:1px solid #e1e1e1;"></div><div style="left:206px;top:714px;width:474px;height:14px;border-right:1px solid #e1e1e1;"></div><div style="left:680px;top:714px;width:20px;height:14px;border-right:1px solid #e1e1e1;"></div><div style="left:700px;top:714px;width:71px;height:14px;border-right:1px solid #e1e1e1;"></div><div style="left:771px;top:714px;width:71px;height:14px;border-right:1px solid #e1e1e1;"></div><div style="left:842px;top:714px;width:106px;height:14px;border-right:1px solid #e1e1e1;"></div><div style="left:948px;top:714px;width:186px;height:14px;border-right:1px solid #e1e1e1;"></div><div style="left:1134px;top:714px;width:106px;height:14px;border-right:1px solid #e1e1e1;"></div><div style="left:1240px;top:237px;width:17px;height:491px;background:#f0f0f0;"></div><div class="btn" style="left:1241px;top:237px;width:16px;height:17px;background:#e4eefa;box-shadow:none;"><svg width="6" height="8" style="left:4px;top:3px" viewBox="0 0 6 8"><path d="M0 3.4H6L3 0.2ZM0 7.6H6L3 4.4Z" fill="#000"/></svg></div><svg width="8" height="4" style="left:1245px;top:261px" viewBox="0 0 8 4"><path d="M0 4H8L4 0Z" fill="#555"/></svg><div style="left:1241px;top:272px;width:15px;height:302px;background:linear-gradient(90deg,#fbfbfb,#e8e8e8 60%,#cfcfcf);border:1px solid #8f8f8f;border-radius:2px;"></div><div style="left:1241px;top:574px;width:16px;height:120px;background:#c8c8c8;"></div><svg width="8" height="4" style="left:1245px;top:701px" viewBox="0 0 8 4"><path d="M0 0H8L4 4Z" fill="#555"/></svg><div class="btn" style="left:1241px;top:712px;width:16px;height:16px;background:#e4eefa;box-shadow:none;"><svg width="6" height="8" style="left:4px;top:3px" viewBox="0 0 6 8"><path d="M0 0.4H6L3 3.6ZM0 4.4H6L3 7.6Z" fill="#000"/></svg></div><div style="left:10px;top:728px;width:190px;height:17px;background:#e9f1fc;border-bottom:1px solid #556;border-right:1px solid #556;"><div class="t" style="left:55px;top:4px;font-size:10px;font-weight:bold;color:#17356a;letter-spacing:0px;">18 Datensätze</div></div><div style="left:200px;top:728px;width:923px;height:17px;background:#c8c8c8;"></div><div style="left:1123px;top:728px;width:17px;height:17px;background:#ececec;"><svg width="5" height="8" style="left:7px;top:4px" viewBox="0 0 5 8"><path d="M0 0V8L5 4Z" fill="#777"/></svg></div><div style="left:1140px;top:728px;width:50px;height:17px;background:#e4eefa;border:1px solid #fff;border-top-color:#777;border-left-color:#777;color:#a3a3a3;text-align:center;line-height:18px;">netto</div><div style="left:1190px;top:728px;width:50px;height:17px;background:#e4eefa;border:1px solid #777;border-top-color:#fff;border-left-color:#fff;color:#a3a3a3;text-align:center;line-height:18px;">brutto</div><div style="left:9px;top:748px;width:1248px;height:215px;background:#b1cff5;"></div><div style="left:12px;top:751px;width:400px;height:20px;background:#fff;border:1px solid #7f9db9;box-shadow:inset 1px 1px 0 #b9cfe8, inset -1px -1px 0 #c9dbf0;"><div class="t" style="left:3px;top:2px;letter-spacing:0.101px;">Erweiterte Suche</div></div><div class="t" style="left:992px;top:755px;letter-spacing:0.37px;"><a>News (0)</a></div><div class="t red" style="left:1052px;top:755px;letter-spacing:-0.117px;">|</div><div class="t" style="left:1067px;top:755px;letter-spacing:0.25px;"><a>Post (0)</a></div><div class="t red" style="left:1123px;top:755px;letter-spacing:-0.117px;">|</div><div class="t" style="left:1132px;top:755px;letter-spacing:0.11px;"><a>Favoriten</a></div><svg width="13" height="11" style="left:1199px;top:755px" viewBox="0 0 13 11"><path d="M0.7 5.5L5.5 0.7V3.5H12.3V7.5H5.5V10.3Z" fill="#f4f2e6" stroke="#555" stroke-width="1"/></svg><svg width="13" height="11" style="left:1216px;top:755px" viewBox="0 0 13 11"><path d="M12.3 5.5L7.5 0.7V3.5H0.7V7.5H7.5V10.3Z" fill="#f4f2e6" stroke="#555" stroke-width="1"/></svg><svg width="10" height="11" style="left:1242px;top:755px" viewBox="0 0 10 11"><path d="M1 2L9 10M8.5 1L1 10.5" fill="none" stroke="#ee0000" stroke-width="1.7"/></svg><div style="left:12px;top:774px;width:1241px;height:184px;background:#fff;border:1px solid #8a96a8;border-top-color:#6f7c8e;border-left-color:#9aa6b6;border-bottom-color:#6a7684;"></div><div style="left:1236px;top:776px;width:16px;height:181px;background:#f0f0f0;"></div><div class="btn" style="left:1236px;top:776px;width:16px;height:17px;border-right-width:1px;border-bottom-width:1px;border-color:#fff #777 #777 #fff;"><svg width="8" height="4" style="left:3px;top:5px" viewBox="0 0 8 4"><path d="M0 4H8L4 0Z" fill="#000"/></svg></div><div style="left:1236px;top:793px;width:16px;height:148px;background:#f0f0f0;border:1px solid #fff;border-right-color:#777;border-bottom-color:#777;"></div><div class="btn" style="left:1236px;top:941px;width:16px;height:16px;border-right-width:1px;border-bottom-width:1px;border-color:#fff #777 #777 #fff;"><svg width="8" height="4" style="left:3px;top:5px" viewBox="0 0 8 4"><path d="M0 0H8L4 4Z" fill="#000"/></svg></div><div style="left:147px;top:782px;width:1083px;height:17px;background:#e4eefb;"></div><div class="t dj" style="left:147px;top:784px;font-size:13px;font-weight:bold;color:#1a4c98;line-height:16px;height:16px;letter-spacing:-0.15px;">Erweiterte Suche</div><div class="t dj" style="left:147px;top:802px;font-size:13px;line-height:16px;height:16px;letter-spacing:-0.15px;">Suche in Warengruppen:</div><div class="t dj" style="left:147px;top:824px;font-size:13px;line-height:16px;height:16px;letter-spacing:-0.15px;">Suche in anderen</div><div class="t dj" style="left:147px;top:840px;font-size:13px;line-height:16px;height:16px;letter-spacing:-0.15px;">Sortimenten:</div><div class="t dj" style="left:147px;top:858px;font-size:13px;line-height:16px;height:16px;letter-spacing:-0.15px;">Kürzlich verwendete</div><div class="t dj" style="left:147px;top:874px;font-size:13px;line-height:16px;height:16px;letter-spacing:-0.15px;">Suchworte:</div><div class="t dj" style="left:147px;top:896px;font-size:13px;line-height:16px;height:16px;letter-spacing:-0.15px;">Ergebnisseite:</div><div class="t dj" style="left:339px;top:804px;font-size:13px;line-height:16px;height:16px;letter-spacing:-0.15px;"><a>Feinkost</a> <span style="position:static;color:#333">|</span> <a>Hauptsortiment</a></div><div class="t dj" style="left:339px;top:826px;font-size:13px;line-height:16px;height:16px;letter-spacing:-0.15px;"><a>Kundenlistung / Offerte</a></div><div class="t dj" style="left:339px;top:860px;font-size:13px;line-height:16px;height:16px;letter-spacing:-0.15px;"><a>&quot;+saft +orange&quot;</a> <span style="position:static;color:#333">|</span> <a>&quot;saft +orange&quot;</a></div><div class="t dj" style="left:339px;top:898px;font-size:13px;line-height:16px;height:16px;letter-spacing:-0.15px;"><span style="position:static;color:#1a4c98">[1]</span> <span style="position:static;color:#333">|</span> <a>[2]</a></div><svg width="90" height="135" style="left:14px;top:780px" viewBox="0 0 667 1001">
<defs>
<filter id="pb" x="-10%" y="-10%" width="120%" height="120%"><feGaussianBlur stdDeviation="6"/></filter>
<filter id="pb2" x="-20%" y="-20%" width="140%" height="140%"><feGaussianBlur stdDeviation="16"/></filter>
<linearGradient id="shg" x1="0" y1="0" x2="0" y2="1"><stop offset="0" stop-color="#e4dece"/><stop offset=".45" stop-color="#f1eee4"/><stop offset="1" stop-color="#ffffff"/></linearGradient>
<linearGradient id="nkg" x1="0" y1="0" x2="1" y2="0"><stop offset="0" stop-color="#7a5640"/><stop offset="1" stop-color="#c09070"/></linearGradient>
<radialGradient id="fcg" cx=".62" cy=".35" r=".75"><stop offset="0" stop-color="#e8c2a6"/><stop offset=".55" stop-color="#d0a080"/><stop offset="1" stop-color="#9a6c52"/></radialGradient>
<radialGradient id="hrg" cx=".55" cy=".3" r=".8"><stop offset="0" stop-color="#7a6552"/><stop offset="1" stop-color="#4a3a2e"/></radialGradient>
</defs>
<g filter="url(#pb2)">
<path d="M50 655 C80 620 115 600 155 612 L215 655 L320 800 L405 715 C435 745 445 800 445 950 L50 950 Z" fill="url(#shg)"/>
</g>
<g filter="url(#pb)">
<path d="M60 650 C80 620 110 600 150 612 L215 655 L322 800 L402 712 C425 750 435 800 432 900 L60 900 Z" fill="url(#shg)"/>
<path d="M225 470 L430 600 L408 715 L324 800 L205 660 Z" fill="url(#nkg)"/>
<path d="M95 320 C75 200 150 85 320 68 C450 58 555 105 558 200 C568 260 552 315 532 332 C520 262 500 300 480 320 L300 500 C280 520 262 560 240 580 C180 570 118 525 100 440 Z" fill="url(#hrg)"/>
<path d="M262 335 C295 242 380 202 450 216 C500 226 526 282 526 342 C532 402 520 432 500 462 C512 502 500 522 490 542 C496 582 480 622 440 642 C400 652 330 625 285 575 C235 520 235 420 262 335Z" fill="url(#fcg)"/>
<path d="M200 150 q40 -40 90 -30 M300 110 q50 -25 110 -5 M420 120 q50 10 80 50 M180 230 q30 -40 80 -50 M480 180 q40 30 50 80 M250 200 q40 -30 80 -20 M340 170 q40 -20 90 0 M440 190 q30 10 50 40 M150 300 q20 -40 60 -50 M230 270 q20 -30 50 -30" stroke="#8f7862" stroke-width="18" fill="none" opacity=".75" stroke-linecap="round"/><path d="M110 330 q-10 80 30 150 q30 50 80 70" stroke="#32261e" stroke-width="40" fill="none" opacity=".6"/>
<path d="M325 368 Q388 338 445 372" stroke="#4a3224" stroke-width="13" fill="none"/>
<path d="M478 362 Q505 350 526 366" stroke="#4a3224" stroke-width="11" fill="none"/>
<path d="M345 402 Q390 420 435 402" stroke="#4d3022" stroke-width="11" fill="none"/>
<path d="M482 398 Q505 410 522 396" stroke="#4d3022" stroke-width="9" fill="none"/>
<path d="M468 410 Q500 470 482 492 Q460 505 436 490" stroke="#9c6a4e" stroke-width="12" fill="none"/>
<path d="M398 546 Q440 532 488 546 Q450 580 398 546Z" fill="#9c564c"/>
<path d="M330 600 Q400 660 470 630" stroke="#8a5c44" stroke-width="14" fill="none" opacity=".7"/>
</g>
<g filter="url(#pb)">
<path d="M108 245 Q128 300 150 362" stroke="#eee6d0" stroke-width="22" fill="none" stroke-linecap="round"/>
<ellipse cx="158" cy="375" rx="34" ry="46" fill="#cdbd9c"/>
<ellipse cx="150" cy="370" rx="16" ry="26" fill="#f0e8d4"/>
</g>
<path d="M172 432 Q262 545 400 598" stroke="#e4ddc9" stroke-width="10" fill="none" stroke-linecap="round"/>
<ellipse cx="408" cy="600" rx="19" ry="15" fill="#efede6" stroke="#9a968c" stroke-width="3"/>
<path d="M150 425 Q135 540 58 628" stroke="#d9cdb1" stroke-width="9" fill="none" stroke-linecap="round"/>
<path d="M322 800 l-14 60 M322 800 l30 50" stroke="#e2dccc" stroke-width="8" fill="none" filter="url(#pb)"/>
</svg>
<div class="btn" style="left:10px;top:968px;width:19px;height:24px;background:#e4eefa;"><svg width="16" height="16" style="left:0px;top:3px" viewBox="0 0 16 16"><defs><radialGradient id="ig" cx=".6" cy=".3" r=".8"><stop offset="0" stop-color="#4a8ad4"/><stop offset="1" stop-color="#153f7c"/></radialGradient></defs><circle cx="8" cy="8" r="7.2" fill="url(#ig)"/><rect x="6.6" y="2.6" width="2.8" height="7" rx="1.3" fill="#fff"/><circle cx="8" cy="12" r="1.5" fill="#fff"/></svg></div><div class="btn" style="left:29px;top:968px;width:85px;height:24px;letter-spacing:0.118px;">Produktinfo</div><div class="btn" style="left:118px;top:968px;width:19px;height:24px;background:#e4eefa;"><svg width="13" height="15" style="left:2px;top:4px" viewBox="0 0 13 15"><path d="M5 0L0 3.5L5 7V5H8Q10 5 10 7H12.5Q12.5 2 8 2H5Z" fill="#1d3f6f"/><path d="M7.5 15L12.5 11.5L7.5 8V10H4.5Q2.5 10 2.5 8H0Q0 13 4.5 13H7.5Z" fill="#1d3f6f"/></svg></div><div class="btn dis" style="left:137px;top:968px;width:90px;height:24px;letter-spacing:0.152px;">Lieferartikel</div><div class="btn" style="left:231px;top:968px;width:19px;height:24px;background:#e4eefa;"><svg width="15" height="16" style="left:1px;top:3px" viewBox="0 0 15 16"><rect x="6" y="2.4" width="4" height="3.6" fill="#d81818"/><rect x="6" y="6.8" width="4" height="9" fill="#777"/></svg></div><div class="btn dis" style="left:250px;top:968px;width:86px;height:24px;letter-spacing:0.199px;">PRiNS</div><div class="btn" style="left:822px;top:968px;width:99px;height:24px;letter-spacing:0.165px;">Alle markieren<div style="left:3px;top:3px;width:90px;height:15px;border:1px dotted #000"></div></div><div class="btn" style="left:924px;top:968px;width:100px;height:24px;letter-spacing:0.252px;">Alle abwählen</div><div class="btn" style="left:1027px;top:968px;width:230px;height:24px;letter-spacing:0.126px;">Markierte Std.-Menge übernehmen</div><div class="menu" style="left:158px;top:267px;width:338px;height:510px;"><div class="mi" style="top:2px;width:332px"><span style="letter-spacing:0.13px;">Markierte Std.-Menge in Bestellung übernehmen</span></div><div class="mi" style="top:23px;width:332px"><span style="letter-spacing:0.098px;">Markierte Einträge ins Lager übernehmen ...</span></div><div class="mi" style="top:44px;width:332px"><span style="letter-spacing:0.142px;">Alle Einträge markieren</span></div><div class="mi" style="top:65px;width:332px"><span style="letter-spacing:0.193px;">Alle Einträge abwählen</span></div><div class="msep" style="left:3px;top:89px;width:330px"></div><div class="mi" style="top:95px;width:332px"><span style="letter-spacing:0.163px;">Neuen Artikel einfügen</span></div><div class="mi" style="top:116px;width:332px"><span style="letter-spacing:0.105px;">Markierte Artikel löschen</span></div><div class="mi" style="top:137px;width:332px"><span style="letter-spacing:0.114px;">Markierte Artikel kopieren</span></div><div class="mi" style="top:158px;width:332px"><span style="letter-spacing:0.145px;">Kommentar einfügen</span></div><div class="msep" style="left:3px;top:182px;width:330px"></div><div class="mi" style="top:188px;width:332px"><span style="letter-spacing:0.163px;">Sortierung</span><svg width="4" height="7" style="right:8px;top:6px" viewBox="0 0 4 7"><path d="M0 0V7L4 3.5Z" fill="#000"/></svg></div><div class="msep" style="left:3px;top:212px;width:330px"></div><div class="mi" style="top:218px;width:332px"><span style="letter-spacing:0.176px;">Neue Einkaufsliste anlegen</span></div><div class="mi" style="top:239px;width:332px"><span style="letter-spacing:0.13px;">Aktuelle Einkaufsliste löschen</span></div><div class="msep" style="left:3px;top:263px;width:330px"></div><div class="mi" style="top:269px;width:332px"><span style="letter-spacing:0.163px;">Andere Währung</span><svg width="4" height="7" style="right:8px;top:6px" viewBox="0 0 4 7"><path d="M0 0V7L4 3.5Z" fill="#000"/></svg></div><div class="mi" style="top:290px;width:332px"><span style="letter-spacing:0.14px;">Produktdetails</span></div><div class="mi" style="top:311px;width:332px"><span style="letter-spacing:0.179px;">Lieferartikel anzeigen</span></div><div class="msep" style="left:3px;top:335px;width:330px"></div><div class="mi" style="top:341px;width:332px"><span style="letter-spacing:0.124px;">Einkaufsliste drucken</span><svg width="4" height="7" style="right:8px;top:6px" viewBox="0 0 4 7"><path d="M0 0V7L4 3.5Z" fill="#000"/></svg></div><div class="mi" style="top:362px;width:332px"><span style="letter-spacing:0.084px;">Liste herunterladen ...</span></div><div class="msep" style="left:3px;top:386px;width:330px"></div><div class="mi hl" style="top:392px;width:332px"><span style="letter-spacing:0.152px;">Positionen in andere Einkaufsliste kopieren</span><svg width="4" height="7" style="right:8px;top:6px" viewBox="0 0 4 7"><path d="M0 0V7L4 3.5Z" fill="#fff"/></svg></div><div class="mi" style="top:413px;width:332px"><span style="letter-spacing:0.09px;">Std.-Mengen der markierten Positionen auf 0 setzen</span></div><div class="msep" style="left:3px;top:437px;width:330px"></div><div class="mi" style="top:443px;width:332px"><span style="letter-spacing:0.018px;">Häufig gestellte Fragen (FAQ) ...</span></div><div class="mi" style="top:464px;width:332px"><span style="letter-spacing:0.013px;">Zum sellyorder Forum ...</span></div><div class="mi" style="top:485px;width:332px"><span style="letter-spacing:0.068px;">Über sellyorder ...</span></div></div><div class="menu" style="left:489px;top:657px;width:267px;height:315px;"><div class="mi" style="top:2px;width:261px"><span style="letter-spacing:0.155px;">Neue Einkaufsliste1</span></div><div class="mi" style="top:23px;width:261px"><span style="letter-spacing:0.08px;">Getränke</span></div><div class="mi" style="top:44px;width:261px"><span style="letter-spacing:0.182px;">Backwaren</span></div><div class="mi" style="top:65px;width:261px"><span style="letter-spacing:0.219px;">Bio</span></div><div class="mi hl" style="top:86px;width:261px"><span style="letter-spacing:0.063px;">TK Lager 2</span></div><div class="mi" style="top:107px;width:261px"><span style="letter-spacing:0.209px;">Lagerliste1</span></div><div class="mi" style="top:128px;width:261px"><span style="letter-spacing:0.205px;">Non-Food</span></div><div class="msep" style="left:3px;top:152px;width:259px"></div><div class="mi" style="top:158px;width:261px"><span style="letter-spacing:0.178px;">2594501: Milchprodukte</span></div><div class="msep" style="left:3px;top:182px;width:259px"></div><div class="mi" style="top:188px;width:261px"><span style="letter-spacing:0.136px;">intern: Molkereiprodukte</span></div><div class="msep" style="left:3px;top:212px;width:259px"></div><div class="mi" style="top:218px;width:261px"><span style="letter-spacing:0.148px;">sellymobile: Neue Einkaufsliste</span></div><div class="mi" style="top:239px;width:261px"><span style="letter-spacing:0.137px;">sellymobile: Liste 19.05.2005 09:01:23</span></div><div class="mi" style="top:260px;width:261px"><span style="letter-spacing:0.066px;">sellymobile: Wurst frisch</span></div><div class="msep" style="left:3px;top:284px;width:259px"></div><div class="mi" style="top:290px;width:261px"><span style="letter-spacing:0.131px;">12345: Liste 22.12.2008 11:31:45</span></div></div><svg width="1266" height="1001" style="left:0;top:0;pointer-events:none" viewBox="0 0 1266 1001"><g fill="none" stroke="#dd0000" stroke-width="1.8"><ellipse cx="175.3" cy="188.3" rx="150.8" ry="15.2"/><ellipse cx="866" cy="975" rx="64" ry="21.5"/><ellipse cx="319.7" cy="674.7" rx="189.4" ry="24.3"/><ellipse cx="627.9" cy="758.4" rx="157.4" ry="23.8"/></g><g fill="#dd0000" font-family="DejaVu Sans, Liberation Sans, sans-serif" font-weight="bold" font-size="20.5"><text x="224.5" y="196" font-family="Liberation Sans, sans-serif" font-size="21.5">1</text><text x="874.5" y="963">2</text><text x="439.5" y="677.7">3</text><text x="689.5" y="762">4</text></g></svg>
</body></html>
